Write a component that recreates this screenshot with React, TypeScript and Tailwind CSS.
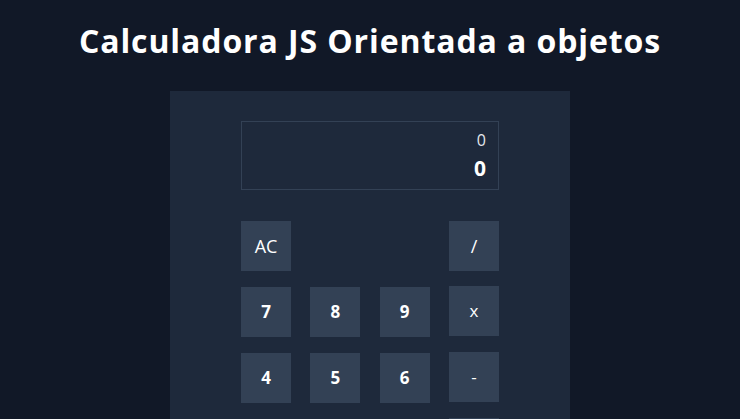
const numRows = [
  ["7", "8", "9"],
  ["4", "5", "6"],
  ["1", "2", "3"],
];
const ops = ["x", "-", "+"];

const btn =
  "w-[50px] h-[50px] bg-[#334155] text-white flex items-center justify-center";

export default function App() {
  return (
    <div
      className="min-h-screen bg-[#111827] text-white flex flex-col items-center"
      style={{ fontFamily: '"Open Sans", "Noto Sans", sans-serif' }}
    >
      <h1 className="text-[32px] font-bold leading-none pt-[25px] h-[91px] tracking-[0.9px]">
        Calculadora JS Orientada a objetos
      </h1>

      <div className="w-[400px] bg-[#1e293b] pt-[30px] pb-10 flex flex-col items-center">
        {/* display */}
        <div className="w-[258px] h-[69px] border border-[#334155] flex flex-col items-end justify-center pr-[12px] gap-[10px]">
          <span className="text-[16px] leading-none text-gray-200">0</span>
          <span className="text-[21px] font-bold leading-none">0</span>
        </div>

        {/* keys */}
        <div className="w-[258px] mt-[31px] flex flex-col gap-4">
          <div className="flex justify-between">
            <button className={`${btn} text-[18px]`}>AC</button>
            <button className={`${btn} text-[18px]`}>/</button>
          </div>
          {numRows.map((row, i) => (
            <div key={i} className="flex justify-between">
              {row.map((n) => (
                <button key={n} className={`${btn} text-[17px] font-bold`}>
                  {n}
                </button>
              ))}
              <button className={`${btn} text-[17px] -mt-px`}>{ops[i]}</button>
            </div>
          ))}
        </div>
      </div>
    </div>
  );
}
